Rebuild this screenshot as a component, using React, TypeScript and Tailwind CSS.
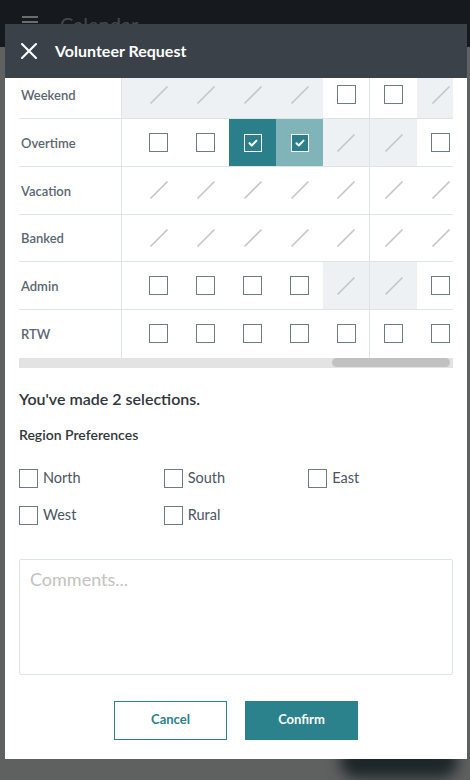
import { X } from 'lucide-react';

type Cell = 'box' | 'off' | 'offBg' | 'on' | 'onLight';

const rows: { label: string; cells: Cell[] }[] = [
  { label: 'Weekend', cells: ['offBg', 'offBg', 'offBg', 'offBg', 'offBg', 'box', 'box', 'offBg'] },
  { label: 'Overtime', cells: ['box', 'box', 'box', 'on', 'onLight', 'offBg', 'offBg', 'box'] },
  { label: 'Vacation', cells: ['off', 'off', 'off', 'off', 'off', 'off', 'off', 'off'] },
  { label: 'Banked', cells: ['off', 'off', 'off', 'off', 'off', 'off', 'off', 'off'] },
  { label: 'Admin', cells: ['box', 'box', 'box', 'box', 'box', 'offBg', 'offBg', 'box'] },
  { label: 'RTW', cells: ['box', 'box', 'box', 'box', 'box', 'box', 'box', 'box'] },
];

const regions = ['North', 'South', 'East', 'West', 'Rural'];

function Slash() {
  return (
    <svg width="18" height="18" viewBox="0 0 18 18">
      <line x1="1" y1="17" x2="17" y2="1" stroke="#c2c7cb" strokeWidth="1.7" strokeLinecap="round" />
    </svg>
  );
}

function Box() {
  return <span className="block h-[19px] w-[19px] shrink-0 border-[1.5px] border-[#6b7c85] bg-white" />;
}

function CheckedBox() {
  return (
    <span className="flex h-[18px] w-[18px] items-center justify-center border-[1.5px] border-white bg-[#2b7f8a]">
      <svg width="12" height="12" viewBox="0 0 12 12">
        <path d="M2.5 6.3l2.3 2.2L9.5 3.6" fill="none" stroke="#fff" strokeWidth="2" strokeLinecap="round" strokeLinejoin="round" />
      </svg>
    </span>
  );
}

function GridCell({ kind, divider }: { kind: Cell; divider: boolean }) {
  const bg =
    kind === 'offBg' ? 'bg-[#eef1f4]' : kind === 'on' ? 'bg-[#2b7f8a]' : kind === 'onLight' ? 'bg-[#80b4b9]' : 'bg-white';
  return (
    <div
      className={`flex h-full w-[47px] shrink-0 items-center justify-center ${bg} ${divider ? 'border-r border-[#dde3e6]' : ''}`}
    >
      {kind === 'box' && <Box />}
      {(kind === 'off' || kind === 'offBg') && <Slash />}
      {(kind === 'on' || kind === 'onLight') && <CheckedBox />}
    </div>
  );
}

export default function App() {
  return (
    <div
      className="relative h-[780px] w-[470px] overflow-hidden bg-[#5f6060]"
      style={{ fontFamily: 'Lato, "Noto Sans", sans-serif' }}
    >
      {/* page behind the overlay */}
      <div className="flex h-[47px] items-start gap-[22px] bg-[#16191d] pl-[22px] pt-[12px]">
        <div className="mt-[4px] flex w-[16px] flex-col gap-[3px]">
          <span className="h-[2px] bg-[#6a6d70]" />
          <span className="h-[2px] bg-[#6a6d70]" />
          <span className="h-[2px] bg-[#6a6d70]" />
        </div>
        <span className="text-[20px] leading-[24px] text-[#45494d]">Calendar</span>
      </div>
      <div className="absolute left-[340px] top-[744px] h-[34px] w-[118px] rounded-full bg-[#1d2628] blur-[7px]" />

      {/* dialog */}
      <div className="absolute left-[5px] top-[24px] flex h-[735px] w-[462px] flex-col bg-white">
        <div className="flex h-[54px] shrink-0 items-center gap-[12px] bg-[#3b4149] pl-[10px]">
          <X size={28} strokeWidth={1.8} color="#ffffff" />
          <span className="text-[16px] font-bold text-white">Volunteer Request</span>
        </div>

        <div className="flex-1 overflow-hidden pl-[14px] pr-[14px]">
          <div className="-mt-[6.4px]">
            {rows.map((row, ri) => (
              <div
                key={row.label}
                className={`flex h-[47.7px] ${ri < rows.length - 1 ? 'border-b border-[#dde3e6]' : ''}`}
              >
                <div className="flex w-[103px] shrink-0 items-center border-r border-[#dde3e6] pl-[2px] pt-[2px] text-[13px] font-semibold text-[#5a6670]">
                  {row.label}
                </div>
                <div className="flex-1 overflow-hidden">
                  <div className="-ml-[34px] flex h-full">
                    {row.cells.map((c, ci) => (
                      <GridCell key={ci} kind={c} divider={ci === 5} />
                    ))}
                  </div>
                </div>
              </div>
            ))}
          </div>
          <div className="flex h-[10px] items-center bg-[#e3e3e3] pl-[313px]">
            <div className="h-[9px] w-[118px] rounded-full bg-[#c1c1c1]" />
          </div>

          <p className="mt-[19px] text-[16px] font-semibold leading-[24px] text-[#30363b]">You've made 2 selections.</p>
          <p className="mt-[14px] text-[14px] font-semibold leading-[20px] text-[#30363b]">Region Preferences</p>

          <div className="mt-[24px] grid grid-cols-3 gap-y-[18px]">
            {regions.map((r) => (
              <label key={r} className="flex h-[19px] items-center gap-[5px] text-[14.5px] text-[#4a5560]">
                <Box />
                <span>{r}</span>
              </label>
            ))}
          </div>

          <div className="mt-[34px] h-[116px] rounded-[2px] border border-[#dde3e6] px-[10px] pt-[6px] text-[18px] text-[#c2c2c2]">
            Comments...
          </div>

          <div className="mt-[26px] flex justify-center gap-[18px]">
            <button className="h-[39px] w-[113px] border-[1.5px] border-[#2b818c] bg-white text-[13px] font-bold text-[#2b818c]">
              Cancel
            </button>
            <button className="h-[39px] w-[113px] bg-[#2b818c] text-[13px] font-bold text-white">Confirm</button>
          </div>
        </div>
      </div>
    </div>
  );
}
